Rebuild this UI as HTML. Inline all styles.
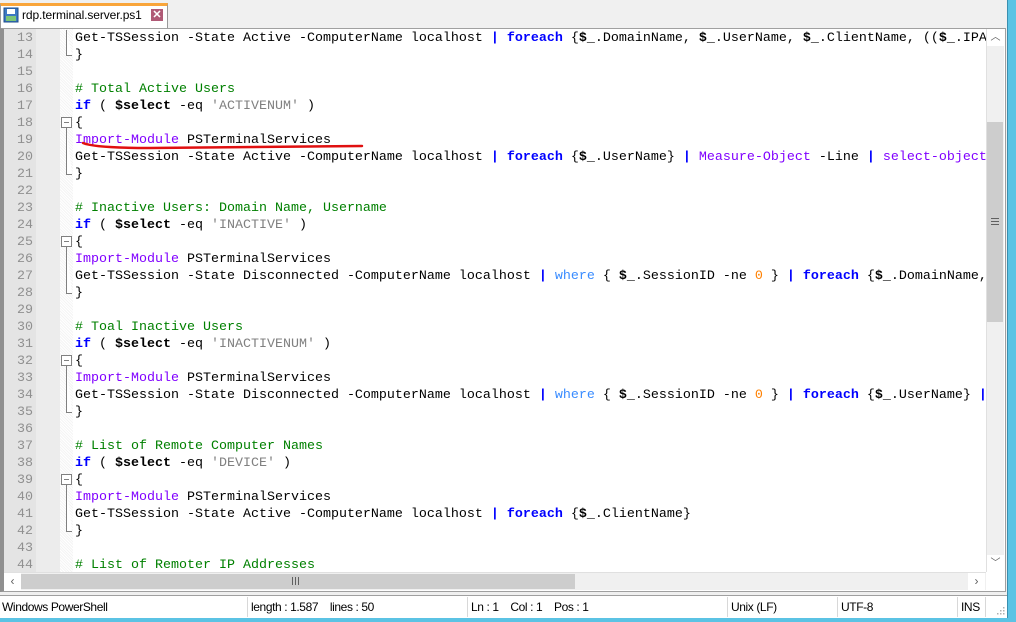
<!DOCTYPE html>
<html><head><meta charset="utf-8"><style>
*{margin:0;padding:0;box-sizing:border-box}
body{width:1016px;height:622px;overflow:hidden;background:#f0f0f0;position:relative;font-family:"Liberation Sans",sans-serif}
.abs{position:absolute}
#code{position:absolute;left:75px;top:30px;font-family:"Liberation Mono",monospace;font-size:13.33px;line-height:17px;white-space:pre;color:#000}
#nums{position:absolute;left:5px;top:30px;width:28px;text-align:right;font-family:"Liberation Mono",monospace;font-size:13.33px;line-height:17px;color:#909090;white-space:pre}
.k{color:#0000ff;font-weight:bold}.w{color:#3a8cff}.c{color:#008000}.s{color:#808080}.p{color:#8000ff}.n{color:#ff8000}.b{font-weight:bold}.pp{color:#0000ff;font-weight:bold}
.st{position:absolute;top:596px;height:22px;font-size:12px;line-height:22px;letter-spacing:-0.4px;color:#000}
.sep{position:absolute;top:597px;width:1px;height:20px;background:#d8d8d8}
</style></head><body>
<!-- tab -->
<div class="abs" style="left:0;top:3px;width:168px;height:26px;background:#fff;border:1px solid #999;border-bottom:none;border-top:3px solid #f9a53a"></div>
<svg class="abs" style="left:3px;top:7px" width="16" height="16" viewBox="0 0 16 16"><rect x="1" y="1" width="14" height="14" fill="#3b78c2" stroke="#1e4d8a"/><rect x="4" y="2" width="8" height="5" fill="#fff"/><rect x="3" y="9" width="10" height="5" fill="#7cc576"/></svg>
<div class="abs" style="left:22px;top:8px;font-size:12px;letter-spacing:-0.1px;color:#000">rdp.terminal.server.ps1</div>
<div class="abs" style="left:151px;top:9px;width:12px;height:12px;background:#b05a76;color:#fff;font-size:11px;line-height:12px;text-align:center;font-weight:bold">✕</div>
<!-- blue right strip -->
<div class="abs" style="left:1007px;top:0;width:9px;height:622px;background:#5bc3e4;border-left:1px solid #3a8fb0"></div>
<div class="abs" style="left:0;top:618px;width:1016px;height:4px;background:#5bc3e4"></div>
<!-- editor -->
<div class="abs" style="left:0;top:28px;width:1006px;height:564px;background:#fff;border:1px solid #a0a0a0;border-left:4px solid #909090"></div>
<div class="abs" style="left:4px;top:29px;width:32px;height:543px;background:#e4e4e4"></div>
<div class="abs" style="left:36px;top:29px;width:24px;height:543px;background:#ececec"></div>
<div class="abs" style="left:60px;top:29px;width:13px;height:543px;background:repeating-linear-gradient(45deg,#f4f4f4 0 1px,#fff 1px 2px)"></div>
<!-- fold lines -->
<svg class="abs" style="left:60px;top:30px" width="14" height="543">
<g stroke="#808080" fill="#fff" stroke-width="1">
<path d="M6.5 0V25.5H12"/>
<rect x="1.5" y="87.5" width="10" height="10"/><path d="M4 92.5H9 M6.5 97.5V144.5H12"/>
<rect x="1.5" y="206.5" width="10" height="10"/><path d="M4 211.5H9 M6.5 216.5V263.5H12"/>
<rect x="1.5" y="325.5" width="10" height="10"/><path d="M4 330.5H9 M6.5 335.5V382.5H12"/>
<rect x="1.5" y="444.5" width="10" height="10"/><path d="M4 449.5H9 M6.5 454.5V501.5H12"/>
</g></svg>
<div id="nums">13
14
15
16
17
18
19
20
21
22
23
24
25
26
27
28
29
30
31
32
33
34
35
36
37
38
39
40
41
42
43
44</div>
<div class="abs" style="left:73px;top:29px;width:913px;height:543px;overflow:hidden">
<div id="code" style="left:2px;top:1px">Get-TSSession -State Active -ComputerName localhost <span class="pp">|</span> <span class="k">foreach</span> {<span class="b">$_</span>.DomainName, <span class="b">$_</span>.UserName, <span class="b">$_</span>.ClientName, ((<span class="b">$_</span>.IPAddress
}

<span class="c"># Total Active Users</span>
<span class="k">if</span> ( <span class="b">$select</span> -eq <span class="s">'ACTIVENUM'</span> )
{
<span class="p">Import-Module</span> PSTerminalServices
Get-TSSession -State Active -ComputerName localhost <span class="pp">|</span> <span class="k">foreach</span> {<span class="b">$_</span>.UserName} <span class="pp">|</span> <span class="p">Measure-Object</span> -Line <span class="pp">|</span> <span class="p">select-object</span> Lines
}

<span class="c"># Inactive Users: Domain Name, Username</span>
<span class="k">if</span> ( <span class="b">$select</span> -eq <span class="s">'INACTIVE'</span> )
{
<span class="p">Import-Module</span> PSTerminalServices
Get-TSSession -State Disconnected -ComputerName localhost <span class="pp">|</span> <span class="w">where</span> { <span class="b">$_</span>.SessionID -ne <span class="n">0</span> } <span class="pp">|</span> <span class="k">foreach</span> {<span class="b">$_</span>.DomainName, <span class="b">$_</span>
}

<span class="c"># Toal Inactive Users</span>
<span class="k">if</span> ( <span class="b">$select</span> -eq <span class="s">'INACTIVENUM'</span> )
{
<span class="p">Import-Module</span> PSTerminalServices
Get-TSSession -State Disconnected -ComputerName localhost <span class="pp">|</span> <span class="w">where</span> { <span class="b">$_</span>.SessionID -ne <span class="n">0</span> } <span class="pp">|</span> <span class="k">foreach</span> {<span class="b">$_</span>.UserName} <span class="pp">|</span>
}

<span class="c"># List of Remote Computer Names</span>
<span class="k">if</span> ( <span class="b">$select</span> -eq <span class="s">'DEVICE'</span> )
{
<span class="p">Import-Module</span> PSTerminalServices
Get-TSSession -State Active -ComputerName localhost <span class="pp">|</span> <span class="k">foreach</span> {<span class="b">$_</span>.ClientName}
}

<span class="c"># List of Remoter IP Addresses</span></div>
</div>
<!-- red annotation -->
<svg class="abs" style="left:0;top:0" width="400" height="160"><path d="M83 143 Q95 148 150 148 L362 146" stroke="#e01010" stroke-width="2.5" fill="none" stroke-linecap="round"/></svg>
<!-- vertical scrollbar -->
<div class="abs" style="left:986px;top:29px;width:18px;height:543px;background:#f0f0f0;border-left:1px solid #e0e0e0"></div>
<div class="abs" style="left:987px;top:29px;width:17px;height:17px;background:#fff;font-size:10px;text-align:center;line-height:17px;color:#606060">︿</div>
<div class="abs" style="left:987px;top:122px;width:16px;height:200px;background:#cdcdcd"></div>
<div class="abs" style="left:991px;top:218px;width:8px;height:7px;border-top:1px solid #606060;border-bottom:1px solid #606060"><div style="margin-top:2px;height:1px;background:#606060"></div></div>
<div class="abs" style="left:987px;top:555px;width:17px;height:17px;background:#fff;font-size:10px;text-align:center;line-height:17px;color:#606060">﹀</div>
<!-- horizontal scrollbar -->
<div class="abs" style="left:4px;top:572px;width:982px;height:18px;background:#f0f0f0;border-top:1px solid #e0e0e0"></div>
<div class="abs" style="left:4px;top:573px;width:17px;height:17px;background:#fff;font-size:12px;text-align:center;line-height:17px;color:#606060">‹</div>
<div class="abs" style="left:21px;top:574px;width:554px;height:15px;background:#cdcdcd"></div>
<div class="abs" style="left:292px;top:577px;width:7px;height:8px;border-left:1px solid #606060;border-right:1px solid #606060"><div style="margin-left:2px;width:1px;height:8px;background:#606060"></div></div>
<div class="abs" style="left:968px;top:573px;width:17px;height:17px;background:#fff;font-size:12px;text-align:center;line-height:17px;color:#606060">›</div>
<!-- status bar -->
<div class="abs" style="left:0;top:595px;width:1007px;height:23px;background:#fff;border-top:1px solid #a0a0a0"></div>
<div class="st" style="left:2px">Windows PowerShell</div>
<div class="sep" style="left:247px"></div>
<div class="st" style="left:251px">length : 1.587&nbsp;&nbsp;&nbsp; lines : 50</div>
<div class="sep" style="left:467px"></div>
<div class="st" style="left:471px">Ln : 1&nbsp;&nbsp;&nbsp; Col : 1&nbsp;&nbsp;&nbsp; Pos : 1</div>
<div class="sep" style="left:727px"></div>
<div class="st" style="left:731px">Unix (LF)</div>
<div class="sep" style="left:837px"></div>
<div class="st" style="left:841px">UTF-8</div>
<div class="sep" style="left:957px"></div>
<div class="st" style="left:961px">INS</div>
<div class="sep" style="left:985px"></div>
<svg class="abs" style="left:995px;top:605px" width="10" height="10"><g fill="#b0b0b0"><rect x="8" y="2" width="1.5" height="1.5"/><rect x="5" y="5" width="1.5" height="1.5"/><rect x="8" y="5" width="1.5" height="1.5"/><rect x="2" y="8" width="1.5" height="1.5"/><rect x="5" y="8" width="1.5" height="1.5"/><rect x="8" y="8" width="1.5" height="1.5"/></g></svg>
</body></html>
